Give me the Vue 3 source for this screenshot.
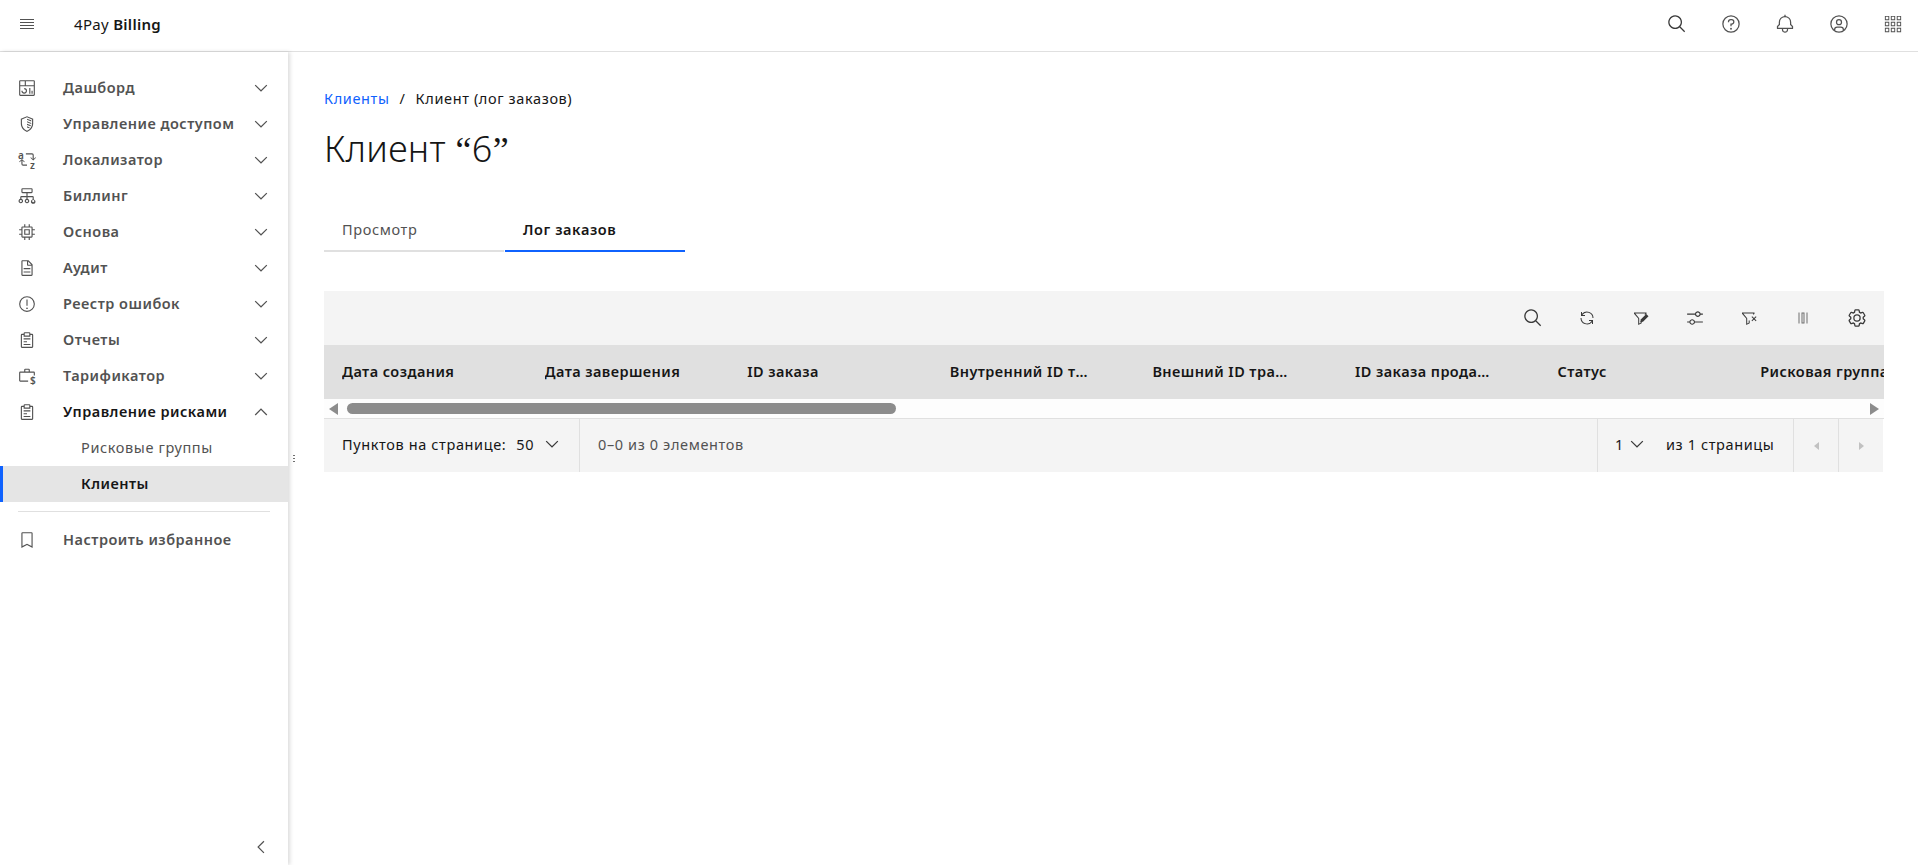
<script setup>
const P = {
  dashboard: ['M24 21h2v5h-2zM20 16h2v10h-2zM11 26a5.0059 5.0059 0 0 1-5-5h2a3 3 0 1 0 3-3v-2a5 5 0 0 1 0 10z','M28 2H4a2.002 2.002 0 0 0-2 2v24a2.002 2.002 0 0 0 2 2h24a2.0027 2.0027 0 0 0 2-2V4a2.0023 2.0023 0 0 0-2-2Zm0 9H14V4h14ZM12 4v7H4V4ZM4 28V13h24l.0024 15Z'],
  chip: ['M11,11V21H21V11Zm8,8H13V13h6Z','M30,13V11H26V8a2,2,0,0,0-2-2H21V2H19V6H13V2H11V6H8A2,2,0,0,0,6,8v3H2v2H6v6H2v2H6v3a2,2,0,0,0,2,2h3v4h2V26h6v4h2V26h3a2,2,0,0,0,2-2V21h4V19H26V13ZM24,24H8V8H24Z'],
  doc: ['M25.7,9.3l-7-7C18.5,2.1,18.3,2,18,2H8C6.9,2,6,2.9,6,4v24c0,1.1,0.9,2,2,2h16c1.1,0,2-0.9,2-2V10C26,9.7,25.9,9.5,25.7,9.3z M18,4.4l5.6,5.6H18V4.4z M24,28H8V4h8v6c0,1.1,0.9,2,2,2h6V28z','M10 22H22V24H10zM10 16H22V18H10z'],
  warn: ['M16,2A14,14,0,1,0,30,16,14,14,0,0,0,16,2Zm0,26A12,12,0,1,1,28,16,12,12,0,0,1,16,28Z','M15 8H17V19H15z','M16,22a1.5,1.5,0,1,0,1.5,1.5A1.5,1.5,0,0,0,16,22Z'],
  report: ['M10 18H16V20H10zM10 13H22V15H10zM10 23H22V25H10z','M25,5H22V4a2,2,0,0,0-2-2H12a2,2,0,0,0-2,2V5H7A2,2,0,0,0,5,7V28a2,2,0,0,0,2,2H25a2,2,0,0,0,2-2V7A2,2,0,0,0,25,5ZM12,4h8V8H12ZM25,28H7V7h3v3H22V7h3Z'],
  bookmark: ['M24,4V26.75l-7.1-3.59-.9-.45-.9.45L8,26.75V4H24m0-2H8A2,2,0,0,0,6,4V30l10-5,10,5V4a2,2,0,0,0-2-2Z'],
  search: ['M29,27.5859l-7.5521-7.5521a11.0177,11.0177,0,1,0-1.4141,1.4141L27.5859,29ZM4,13a9,9,0,1,1,9,9A9.01,9.01,0,0,1,4,13Z'],
  help: ['M16,2A14,14,0,1,0,30,16,14,14,0,0,0,16,2Zm0,26A12,12,0,1,1,28,16,12,12,0,0,1,16,28Z','M16,22a1.5,1.5,0,1,0,1.5,1.5A1.5,1.5,0,0,0,16,22Z','M17,8H15.5A4.49,4.49,0,0,0,11,12.5V13h2v-.5A2.5,2.5,0,0,1,15.5,10H17a2.5,2.5,0,0,1,0,5H15v4.5h2V17a4.5,4.5,0,0,0,0-9Z'],
  bell: ['M28.7071,19.293,26,16.5859V13a10.0136,10.0136,0,0,0-9-9.9492V1H15V3.0508A10.0136,10.0136,0,0,0,6,13v3.5859L3.2929,19.293A1,1,0,0,0,3,20v3a1,1,0,0,0,1,1h7v.7768a5.152,5.152,0,0,0,4.5,5.1987A5.0057,5.0057,0,0,0,21,25V24h7a1,1,0,0,0,1-1V20A1,1,0,0,0,28.7071,19.293ZM19,25a3,3,0,0,1-6,0V24h6Zm8-3H5V20.4141L7.707,17.707A1,1,0,0,0,8,17V13a8,8,0,0,1,16,0v4a1,1,0,0,0,.293.707L27,20.4141Z'],
  user: ['M16,8a5,5,0,1,0,5,5A5,5,0,0,0,16,8Zm0,8a3,3,0,1,1,3-3A3.0034,3.0034,0,0,1,16,16Z','M16,2A14,14,0,1,0,30,16,14.0158,14.0158,0,0,0,16,2ZM10,26.3765V25a3.0033,3.0033,0,0,1,3-3h6a3.0033,3.0033,0,0,1,3,3v1.3765a11.8989,11.8989,0,0,1-12,0Zm13.9925-1.4507A5.0016,5.0016,0,0,0,19,20H13a5.0016,5.0016,0,0,0-4.9925,4.9258,12,12,0,1,1,15.985,0Z'],
  grid: ['M3 3h7v7H3zM4.500 4.500v4h4v-4zM12.500 3h7v7h-7zM14 4.500v4h4v-4zM22 3h7v7h-7zM23.500 4.500v4h4v-4zM3 12.500h7v7H3zM4.500 14v4h4v-4zM12.500 12.500h7v7h-7zM14 14v4h4v-4zM22 12.500h7v7h-7zM23.500 14v4h4v-4zM3 22h7v7H3zM4.500 23.500v4h4v-4zM12.500 22h7v7h-7zM14 23.500v4h4v-4zM22 22h7v7h-7zM23.500 23.500v4h4v-4z'],
  renew: ['M12 10H6.78A11 11 0 0 1 27 16h2A13 13 0 0 0 6 7.68V4H4v8h8zM20 22h5.22A11 11 0 0 1 5 16H3a13 13 0 0 0 23 8.32V28h2v-8h-8z'],
  sliders: ['M30 8h-4.1c-.5-2.3-2.5-4-4.9-4s-4.4 1.7-4.9 4H2v2h14.1c.5 2.3 2.5 4 4.9 4s4.4-1.7 4.9-4H30V8zm-9 4c-1.7 0-3-1.3-3-3s1.3-3 3-3 3 1.3 3 3-1.3 3-3 3zM2 24h4.1c.5 2.3 2.5 4 4.9 4s4.4-1.7 4.9-4H30v-2H15.9c-.5-2.3-2.5-4-4.9-4s-4.4 1.7-4.9 4H2v2zm9-4c1.7 0 3 1.3 3 3s-1.3 3-3 3-3-1.3-3-3 1.3-3 3-3z'],
  filterEdit: ['M2 5h25v2.400L24.600 10.200l-1.500-1.300L24.600 7H4.600l7.800 9.400V27l3-1.700V23h2v3.400L10.400 30V17.200L2 7.400z','M26.500 8l4.500 4.500-11 11-5.500 1 1-5.500z'],
  filterX: ['M2 5h25v2.400l-1.700 2-1.500-1.300L24.600 7H4.600l7.800 9.400V27l3-1.700V21h2v5.400L10.400 30V17.200L2 7.400z','M22.400 12.400l3.600 3.600 3.600-3.600 1.400 1.400-3.600 3.600 3.600 3.600-1.400 1.400-3.600-3.600-3.600 3.600-1.400-1.400 3.600-3.600-3.600-3.600z'],
  columns: ['M7 5h2v22H7zM23 5h2v22h-2zM13 5h6v22h-6zM15 7v18h2V7z'],
  gear: ['M27,16.76c0-.25,0-.5,0-.76s0-.51,0-.77l1.92-1.68A2,2,0,0,0,29.3,11L26.94,7a2,2,0,0,0-1.73-1,2,2,0,0,0-.64.1l-2.43.82a11.35,11.35,0,0,0-1.31-.75l-.51-2.52a2,2,0,0,0-2-1.61H13.64a2,2,0,0,0-2,1.61l-.51,2.52a11.48,11.48,0,0,0-1.32.75L7.43,6.06A2,2,0,0,0,6.79,6,2,2,0,0,0,5.06,7L2.7,11a2,2,0,0,0,.41,2.51L5,15.24c0,.25,0,.5,0,.76s0,.51,0,.77L3.11,18.45A2,2,0,0,0,2.7,21L5.06,25a2,2,0,0,0,1.73,1,2,2,0,0,0,.64-.1l2.43-.82a11.35,11.35,0,0,0,1.31.75l.51,2.52a2,2,0,0,0,2,1.61h4.72a2,2,0,0,0,2-1.61l.51-2.52a11.48,11.48,0,0,0,1.32-.75l2.42.82a2,2,0,0,0,.64.1,2,2,0,0,0,1.73-1L29.3,21a2,2,0,0,0-.41-2.51ZM25.21,24l-3.43-1.16a8.86,8.86,0,0,1-2.71,1.57L18.36,28H13.64l-.71-3.55a9.36,9.36,0,0,1-2.7-1.57L6.79,24,4.43,20l2.72-2.4a8.9,8.9,0,0,1,0-3.13L4.43,12,6.79,8l3.43,1.16a8.86,8.86,0,0,1,2.71-1.57L13.64,4h4.72l.71,3.55a9.36,9.36,0,0,1,2.7,1.57L25.21,8,27.57,12l-2.72,2.4a8.9,8.9,0,0,1,0,3.13L27.57,20Z','M16,22a6,6,0,1,1,6-6A5.94,5.94,0,0,1,16,22Zm0-10a3.91,3.91,0,0,0-4,4,3.91,3.91,0,0,0,4,4,3.91,3.91,0,0,0,4-4A3.91,3.91,0,0,0,16,12Z'],
  down: ['M16 22L6 12l1.4-1.4 8.6 8.6 8.6-8.6L26 12z'],
  up: ['M16 10L26 20l-1.4 1.4-8.6-8.6-8.6 8.6L6 20z'],
  left: ['M10 16L20 6l1.4 1.400-8.600 8.600 8.600 8.600L20 26z'],
  shield: ['M16 2 5 6.500V15c0 7 4.500 12.500 11 15 6.500-2.500 11-8 11-15V6.500zM16 4.200l9 3.700V15c0 5.800-3.500 10.400-9 12.800C10.500 25.400 7 20.800 7 15V7.900z','M16 6.500l7.500 3v2L16 8.500zM16 11l7.500 3v2L16 13zM16 15.500l7 2.800-.800 1.900-6.200-2.500zM16 20l5 2-1.200 1.700L16 22.200z'],
  flow: ['M8 2h16a2 2 0 0 1 2 2v5a2 2 0 0 1-2 2h-7v5h9a2 2 0 0 1 2 2v4.100a4 4 0 1 1-2 0V18h-9v3.100a4 4 0 1 1-2 0V18H6v3.100a4 4 0 1 1-2 0V18a2 2 0 0 1 2-2h9v-5H8a2 2 0 0 1-2-2V4a2 2 0 0 1 2-2zM8 4v5h16V4zM5 23a2 2 0 1 0 0 4 2 2 0 0 0 0-4zM16 23a2 2 0 1 0 0 4 2 2 0 0 0 0-4zM27 23a2 2 0 1 0 0 4 2 2 0 0 0 0-4z'],
  sort: ['M14 4h11a3 3 0 0 1 3 3v7l3-3 1 1-5 5-5-5 1-1 3 3V7a1 1 0 0 0-1-1H14zM7 14l5 5-1 1-3-3v6a1 1 0 0 0 1 1h7v2H9a3 3 0 0 1-3-3v-6l-3 3-1-1z'],
  case: ['M11 8V5a2 2 0 0 1 2-2h6a2 2 0 0 1 2 2v3h7a2 2 0 0 1 2 2v5h-2v-5H4v14h14v2H4a2 2 0 0 1-2-2V10a2 2 0 0 1 2-2zM13 5v3h6V5z']
}

const nav = [
  { label: 'Дашборд', icon: 'dashboard' },
  { label: 'Управление доступом', icon: 'shield' },
  { label: 'Локализатор', icon: 'sort', letters: true },
  { label: 'Биллинг', icon: 'flow' },
  { label: 'Основа', icon: 'chip' },
  { label: 'Аудит', icon: 'doc' },
  { label: 'Реестр ошибок', icon: 'warn' },
  { label: 'Отчеты', icon: 'report' },
  { label: 'Тарификатор', icon: 'case', dollar: true },
  { label: 'Управление рисками', icon: 'report', open: true }
]
const topIcons = ['search', 'help', 'bell', 'user', 'grid']
const tools = [
  { name: 'search', cls: 'i20' },
  { name: 'renew', cls: 'i16' },
  { name: 'filterEdit', cls: 'i16' },
  { name: 'sliders', cls: 'i18' },
  { name: 'filterX', cls: 'i16' },
  { name: 'columns', cls: 'i16 dim' },
  { name: 'gear', cls: 'i20' }
]
const columns = ['Дата создания', 'Дата завершения', 'ID заказа', 'Внутренний ID транзакции', 'Внешний ID транзакции', 'ID заказа продавца', 'Статус', 'Рисковая группа', 'Сумма']
</script>

<template>
  <div class="app">
    <header class="topbar">
      <button class="menu-btn" aria-label="Меню"><span></span><span></span><span></span><span></span></button>
      <div class="brand">4Pay <b>Billing</b></div>
      <div class="top-actions">
        <button v-for="name in topIcons" :key="name" class="top-btn">
          <svg class="i20" viewBox="0 0 32 32"><path v-for="d in P[name]" :key="d" :d="d" fill-rule="evenodd" /></svg>
        </button>
      </div>
    </header>

    <div class="body">
      <aside class="sidenav">
        <nav class="nav-list">
          <div v-for="item in nav" :key="item.label" class="nav-row" :class="{ open: item.open }">
            <span class="nav-icon">
              <svg class="i18" viewBox="0 0 32 32">
                <path v-for="d in P[item.icon]" :key="d" :d="d" fill-rule="evenodd" />
              </svg>
              <span v-if="item.letters" class="mini mini-a">a</span>
              <span v-if="item.letters" class="mini mini-z">z</span>
              <span v-if="item.dollar" class="mini mini-d">$</span>
            </span>
            <span class="nav-label">{{ item.label }}</span>
            <svg class="i20 chev" viewBox="0 0 32 32"><path :d="item.open ? P.up[0] : P.down[0]" /></svg>
          </div>
          <div class="sub-row">Рисковые группы</div>
          <div class="sub-row active">Клиенты</div>
          <div class="divider"></div>
          <div class="nav-row">
            <span class="nav-icon"><svg class="i18" viewBox="0 0 32 32"><path :d="P.bookmark[0]" /></svg></span>
            <span class="nav-label">Настроить избранное</span>
          </div>
        </nav>
        <div class="collapse">
          <svg class="i20" viewBox="0 0 32 32"><path :d="P.left[0]" /></svg>
        </div>
        <span class="grip"><i></i><i></i><i></i></span>
      </aside>

      <main class="main">
        <div class="crumbs"><a>Клиенты</a><span class="sep">/</span><span>Клиент (лог заказов)</span></div>
        <h1 class="title">Клиент <span class="q">“</span>6<span class="q">”</span></h1>
        <div class="tabs">
          <div class="tab">Просмотр</div>
          <div class="tab selected">Лог заказов</div>
        </div>

        <section class="table">
          <div class="toolbar">
            <button v-for="t in tools" :key="t.name" class="tool">
              <svg :class="t.cls" viewBox="0 0 32 32"><path v-for="d in P[t.name]" :key="d" :d="d" fill-rule="evenodd" /></svg>
            </button>
          </div>
          <div class="thead-wrap">
            <div class="thead">
              <div v-for="c in columns" :key="c" class="th"><span>{{ c }}</span></div>
            </div>
          </div>
          <div class="scrollbar">
            <span class="arrow left-a"></span>
            <span class="thumb"></span>
            <span class="arrow right-a"></span>
          </div>
          <div class="pager">
            <div class="pg-size">
              <span>Пунктов на странице:</span>
              <span class="val">50</span>
              <svg class="i20 pg-chev" viewBox="0 0 32 32"><path :d="P.down[0]" /></svg>
            </div>
            <div class="pg-count">0–0 из 0 элементов</div>
            <div class="pg-page">
              <span class="val">1</span>
              <svg class="i20 pg-chev" viewBox="0 0 32 32"><path :d="P.down[0]" /></svg>
              <span class="of">из 1 страницы</span>
            </div>
            <div class="pg-btn"><span class="tri tri-l"></span></div>
            <div class="pg-btn"><span class="tri tri-r"></span></div>
          </div>
        </section>
      </main>
    </div>
  </div>
</template>

<style>
html, body { margin: 0; height: 100%; overflow: hidden; background: #fff; }
</style>

<style scoped>
.app {
  height: 865px;
  display: flex;
  flex-direction: column;
  overflow: hidden;
  font-family: "Noto Sans", "Open Sans", sans-serif;
  font-size: 14.5px;
  letter-spacing: 0.62px;
  color: #161616;
}
button { border: 0; background: none; padding: 0; display: flex; align-items: center; justify-content: center; }
svg { display: block; fill: currentColor; }
.i20 { width: 20px; height: 20px; }
.i18 { width: 18px; height: 18px; }
.i16 { width: 16px; height: 16px; }
.dim { color: #6f6f6f; }

.topbar {
  flex: 0 0 52px;
  box-sizing: border-box;
  display: flex;
  align-items: center;
  padding-bottom: 3px;
  border-bottom: 1px solid #e0e0e0;
  background: #fff;
}
.menu-btn {
  width: 14px;
  height: 11px;
  margin-left: 20px;
  flex-direction: column;
  justify-content: space-between;
}
.menu-btn span { display: block; width: 100%; height: 1px; background: #525252; }
.brand { margin-left: 40px; font-size: 15px; letter-spacing: 0.3px; }
.brand b { font-weight: 600; }
.top-actions { margin-left: auto; display: flex; gap: 4px; color: #525252; }
.top-btn { width: 50px; height: 48px; color: inherit; }
.top-btn:first-child { color: #393939; }

.body { flex: 1; display: flex; min-height: 0; }

.sidenav {
  position: relative;
  flex: 0 0 288px;
  display: flex;
  flex-direction: column;
  box-shadow: 2px 0 4px rgba(0, 0, 0, 0.14);
  background: #fff;
}
.nav-list { padding-top: 18px; flex: 1; }
.nav-row {
  height: 36px;
  display: flex;
  align-items: center;
  color: #525252;
  font-weight: 600;
  letter-spacing: 0.48px;
  padding-left: 18px;
  padding-right: 17px;
}
.nav-row.open { color: #161616; }
.nav-row.open .nav-icon { color: #525252; }
.nav-icon { position: relative; width: 45px; flex: none; display: flex; }
.nav-label { flex: 1; white-space: nowrap; padding-bottom: 2px; }
.chev { color: #525252; flex: none; }
.mini {
  position: absolute;
  font-size: 10px;
  line-height: 9px;
  font-weight: 600;
  letter-spacing: 0;
}
.mini-a { left: 0; top: 0; }
.mini-z { left: 12px; top: 10px; }
.mini-d { left: 12px; top: 9px; }
.sub-row {
  height: 34px;
  padding-bottom: 2px;
  display: flex;
  align-items: center;
  padding-left: 81px;
  color: #525252;
}
.sub-row.active {
  font-weight: 600;
  letter-spacing: 0.48px;
  color: #161616;
  background: #e5e5e5;
  box-shadow: inset 3px 0 0 #0f62fe;
}
.divider { height: 1px; background: #e0e0e0; margin: 9px 18px 10px; }
.collapse { height: 36px; padding-right: 17px; display: flex; align-items: center; justify-content: flex-end; color: #525252; }
.grip {
  position: absolute;
  left: 293px;
  top: 403px;
  display: flex;
  flex-direction: column;
  gap: 2px;
}
.grip i { width: 2px; height: 1px; background: #6f6f6f; display: block; }

.main { flex: 1; min-width: 0; padding: 37px 34px 0 36px; }
.crumbs { display: flex; height: 18px; align-items: center; gap: 9px; padding-bottom: 2px; }
.crumbs a { color: #0f62fe; }
.sep { margin: 0 1px; }
.title { margin: 16px 0 0; height: 48px; font-size: 36px; line-height: 48px; font-weight: 300; letter-spacing: 0.3px; }
.q { font-family: "Liberation Serif", serif; font-weight: 400; }
.tabs { display: flex; margin-top: 39px; }
.tab {
  box-sizing: border-box;
  width: 180px;
  height: 40px;
  padding: 0 0 5px 18px;
  margin-right: 1px;
  display: flex;
  align-items: center;
  color: #525252;
  border-bottom: 2px solid #e0e0e0;
}
.tab.selected { font-weight: 600; letter-spacing: 0.6px; color: #161616; border-bottom-color: #0f62fe; }

.table { margin-top: 39px; }
.toolbar {
  height: 54px;
  background: #f4f4f4;
  display: flex;
  justify-content: flex-end;
  color: #393939;
}
.tool { width: 54px; height: 54px; color: inherit; }
.thead-wrap { overflow: hidden; }
.thead { display: flex; width: max-content; background: #e0e0e0; }
.th {
  box-sizing: border-box;
  width: 202.6px;
  height: 54px;
  padding: 0 43px 2px 18px;
  display: flex;
  align-items: center;
  font-weight: 600;
  letter-spacing: 0.42px;
}
.th span { overflow: hidden; white-space: nowrap; text-overflow: ellipsis; }
.th:nth-child(n + 7) span { overflow: visible; }
.scrollbar {
  height: 20px;
  box-sizing: border-box;
  background: #fdfdfd;
  display: flex;
  align-items: center;
  padding: 0 5px;
  border-bottom: 1px solid #e0e0e0;
}
.thumb {
  width: 549px;
  height: 11px;
  margin-left: 9px;
  border-radius: 6px;
  background: #8c8c8c;
}
.arrow { width: 0; height: 0; border-top: 6px solid transparent; border-bottom: 6px solid transparent; }
.left-a { border-right: 9px solid #8c8c8c; }
.right-a { border-left: 9px solid #8c8c8c; margin-left: auto; }
.pager {
  height: 53px;
  margin-right: 1px;
  background: #f4f4f4;
  display: flex;
  align-items: stretch;
}
.pg-size, .pg-count, .pg-page { display: flex; align-items: center; padding-bottom: 3px; }
.pg-size { width: 256px; box-sizing: border-box; padding-left: 18px; border-right: 1px solid #e0e0e0; }
.val { margin-left: 10px; }
.pg-chev { margin-left: 8px; color: #393939; }
.pg-count { padding-left: 18px; flex: 1; color: #525252; }
.pg-page { width: 196px; box-sizing: border-box; padding-left: 7px; border-left: 1px solid #e0e0e0; }
.pg-page .pg-chev { margin-left: 3px; }
.of { margin-left: 19px; }
.pg-btn { width: 45px; box-sizing: border-box; border-left: 1px solid #e0e0e0; display: flex; align-items: center; justify-content: center; }
.tri { width: 0; height: 0; border-top: 4px solid transparent; border-bottom: 4px solid transparent; }
.tri-l { border-right: 5px solid #c1c1c1; }
.tri-r { border-left: 5px solid #c1c1c1; }
</style>
